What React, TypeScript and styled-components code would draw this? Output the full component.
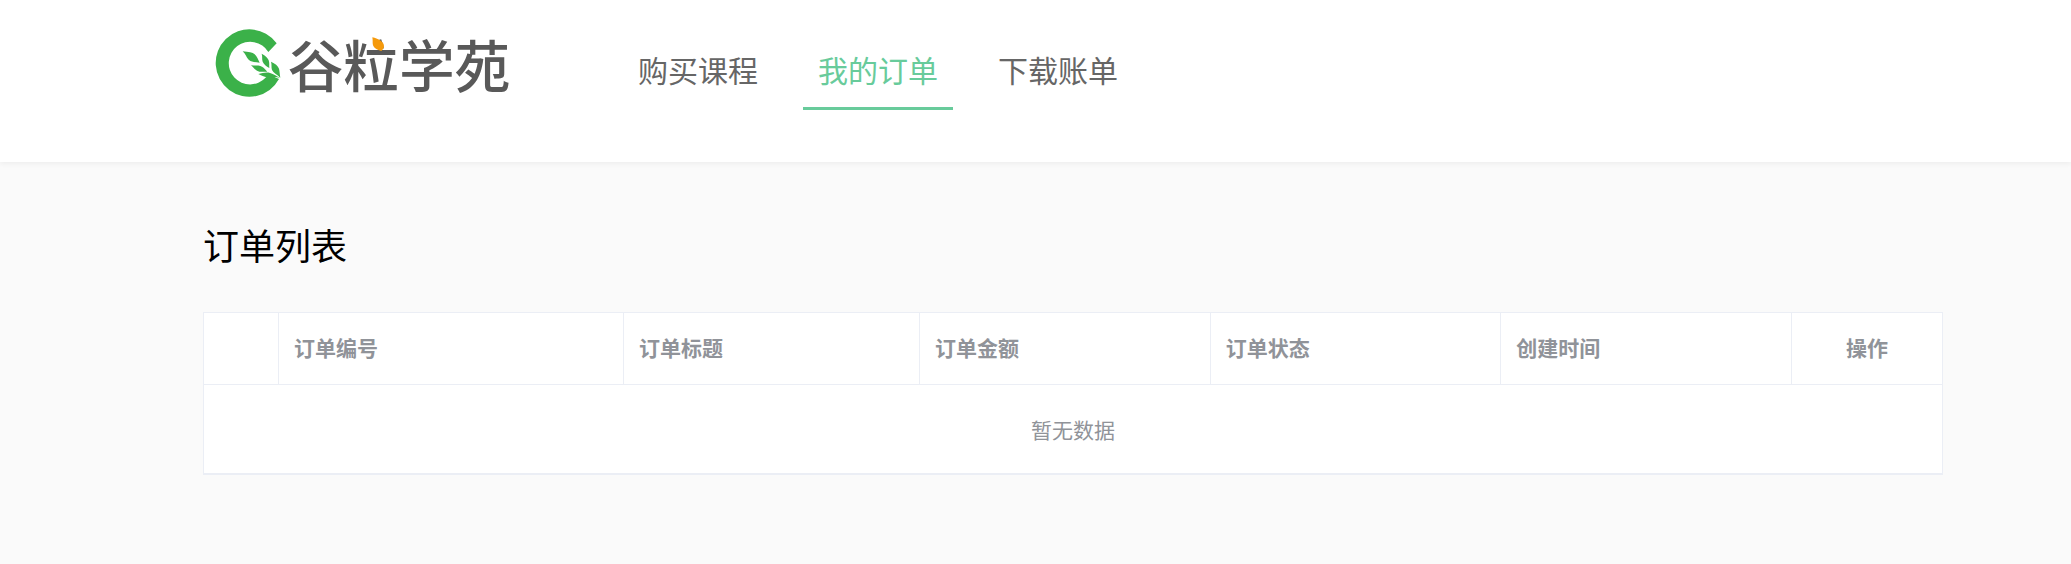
import React from "react";
import styled, { createGlobalStyle } from "styled-components";

const GlobalStyle = createGlobalStyle`
  *, *::before, *::after { box-sizing: border-box; }
  body {
    margin: 0;
    background: #fafafa;
    color: #000;
    font-family: "Noto Sans CJK SC", sans-serif;
  }
`;

const Header = styled.header`
  display: flex;
  align-items: flex-start;
  height: 162px;
  padding: 20px 128px 0 203px;
  background: #fff;
  box-shadow: 0 2px 5px rgba(0, 0, 0, 0.05);
`;

const LogoLink = styled.a`
  flex: none;
  display: block;
  width: 320px;
  height: 90px;
  color: #595959;
`;

const LogoImage = styled.svg`
  display: block;
  width: 100%;
  height: 100%;
`;

const Nav = styled.nav`
  display: flex;
  gap: 30px;
  margin-left: 100px;
  padding-top: 15px;
`;

const NavLink = styled.a<{ $active?: boolean }>`
  padding: 0 15px;
  height: 75px;
  border-bottom: 3px solid ${(p) => (p.$active ? "#68cb9b" : "transparent")};
  color: ${(p) => (p.$active ? "#68cb9b" : "#666")};
  font-size: 30px;
  line-height: 68px;
  text-decoration: none;
  white-space: nowrap;
`;

const Main = styled.main`
  padding: 55px 128px 89px 203px;
`;

const Title = styled.h1`
  margin: 0 0 41px;
  font-size: 36px;
  font-weight: 400;
  line-height: 54px;
`;

const Table = styled.table`
  width: 100%;
  table-layout: fixed;
  border-collapse: separate;
  border-spacing: 0;
  border: 1px solid #ebeef5;
  border-bottom-width: 2px;
  background: #fff;
  color: #909399;
  font-size: 21px;
  line-height: 34px;
`;

const HeadCell = styled.th<{ $align?: string; $last?: boolean }>`
  height: 72px;
  padding: 0 15px 3px;
  border-right: ${(p) => (p.$last ? "0" : "1px solid #ebeef5")};
  border-bottom: 1px solid #ebeef5;
  font-weight: 700;
  text-align: ${(p) => p.$align || "left"};
`;

const EmptyCell = styled.td`
  height: 88px;
  padding: 0;
  text-align: center;
`;

const columns = [
  { label: "", width: 75 },
  { label: "订单编号", width: 345 },
  { label: "订单标题", width: 296 },
  { label: "订单金额" },
  { label: "订单状态" },
  { label: "创建时间" },
  { label: "操作", width: 150, align: "center" },
];

const links = [
  { label: "购买课程" },
  { label: "我的订单", active: true },
  { label: "下载账单" },
];

function Logo() {
  return (
    <LogoImage viewBox="9 -2 960 270" role="img" aria-label="谷粒学苑">
      <path
        fill="#3bb149"
        d="M230 68 A101 101 0 1 0 237 175 L212 164 L198 170 A64 64 0 1 1 205 94 Z"
      />
      <g fill="#3bb149">
        <path d="M128 92 C146 94 158 95 164 101 C171 108 174 116 179 126 C166 124 154 124 147 118 C139 111 138 101 128 92Z" />
        <path d="M185 99 C196 105 204 112 206 119 C209 127 207 133 208 142 C199 136 191 131 188 123 C185 115 188 108 185 99Z" />
        <path d="M153 134 C165 136 178 133 186 138 C193 142 196 147 202 153 C190 153 179 155 171 150 C163 146 160 139 153 134Z" />
        <path d="M213 123 C225 128 234 135 237 144 C239 152 239 160 241 171 C231 162 220 157 216 148 C213 140 216 132 213 123Z" />
        <path d="M175 160 C187 158 199 153 210 157 C221 161 231 166 241 173 C231 168 221 168 208 170 C195 171 187 165 175 160Z" />
      </g>
      <text
        x="263"
        y="198"
        fill="currentColor"
        fontFamily="'Noto Sans CJK SC', sans-serif"
        fontSize="167"
        fontWeight="500"
      >
        谷粒学苑
      </text>
      <path
        fill="#f59a0c"
        d="M517 50 C535 54 547 61 551 71 C554 80 550 86 544 91 C531 88 522 83 519 74 C517 66 519 59 517 50Z"
      />
    </LogoImage>
  );
}

export default function App() {
  return (
    <>
      <GlobalStyle />
      <Header>
        <LogoLink href="#">
          <Logo />
        </LogoLink>
        <Nav>
          {links.map((link) => (
            <NavLink
              key={link.label}
              href="#"
              $active={link.active}
              aria-current={link.active ? "page" : undefined}
            >
              {link.label}
            </NavLink>
          ))}
        </Nav>
      </Header>
      <Main>
        <Title>订单列表</Title>
        <Table>
          <colgroup>
            {columns.map((c, i) => (
              <col key={i} width={c.width} />
            ))}
          </colgroup>
          <thead>
            <tr>
              {columns.map((c, i) => (
                <HeadCell
                  key={i}
                  scope="col"
                  $align={c.align}
                  $last={i === columns.length - 1}
                >
                  {c.label}
                </HeadCell>
              ))}
            </tr>
          </thead>
          <tbody>
            <tr>
              <EmptyCell colSpan={columns.length}>暂无数据</EmptyCell>
            </tr>
          </tbody>
        </Table>
      </Main>
    </>
  );
}
